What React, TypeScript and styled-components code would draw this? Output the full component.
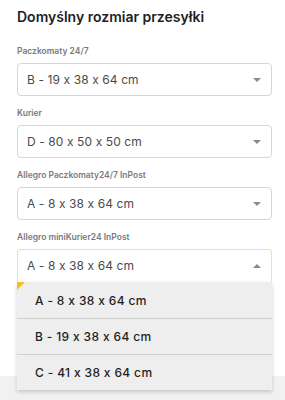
import styled, { createGlobalStyle } from "styled-components";

const GlobalStyle = createGlobalStyle`
  body {
    margin: 0;
    background: #f1f1f1;
    font-family: "Inter", "Noto Sans", sans-serif;
    font-feature-settings: "calt" 0;
  }
`;

const Page = styled.div`
  min-height: 400px;
  background: #f1f1f1;
`;

const Card = styled.div`
  background: #ffffff;
  height: 376px;
  box-sizing: border-box;
  padding: 5px 13px 0 17px;
`;

const Title = styled.h1`
  margin: 0 0 16px;
  font-size: 14px;
  line-height: 24px;
  font-weight: 600;
  color: #1e1e1e;
`;

const Fields = styled.div`
  display: flex;
  flex-direction: column;
  gap: 11px;
`;

const Field = styled.div`
  position: relative;
  display: flex;
  flex-direction: column;
`;

const Label = styled.label`
  font-size: 8.5px;
  line-height: 13px;
  font-weight: 600;
  color: #7a7a7a;
  margin-bottom: 5px;
`;

const Select = styled.div<{ $open?: boolean }>`
  height: 33px;
  box-sizing: border-box;
  display: flex;
  align-items: center;
  justify-content: space-between;
  padding: 0 10px 0 9px;
  border: 1px solid ${(p) => (p.$open ? "#fbe08a" : "#d6d6d6")};
  border-bottom-color: ${(p) => (p.$open ? "transparent" : "#d6d6d6")};
  border-radius: ${(p) => (p.$open ? "4px 4px 0 0" : "4px")};
  font-size: 12px;
  color: #4a4a4a;
  letter-spacing: 0.1px;
`;

const Arrow = styled.span<{ $up?: boolean }>`
  width: 0;
  height: 0;
  border-left: 4px solid transparent;
  border-right: 4px solid transparent;
  ${(p) =>
    p.$up ? "border-bottom: 4px solid #8a8a8a;" : "border-top: 4px solid #8a8a8a;"}
`;

const Menu = styled.ul`
  position: absolute;
  top: 100%;
  left: 0;
  right: 0;
  margin: 0;
  padding: 0;
  list-style: none;
  background: #eeeeee;
  box-shadow: 0 2px 4px rgba(0, 0, 0, 0.18);
  z-index: 10;
`;

const Corner = styled.span`
  position: absolute;
  top: 0;
  left: 0;
  width: 0;
  height: 0;
  border-top: 8px solid #f4c21d;
  border-right: 8px solid transparent;
`;

const Option = styled.li`
  height: 36px;
  box-sizing: border-box;
  display: flex;
  align-items: center;
  padding-left: 18px;
  font-size: 12px;
  font-weight: 500;
  color: #1f1f1f;
  letter-spacing: 0.35px;
  & + & {
    border-top: 1px solid #cfcfcf;
  }
`;

const fields = [
  { label: "Paczkomaty 24/7", value: "B - 19 x 38 x 64 cm" },
  { label: "Kurier", value: "D - 80 x 50 x 50 cm" },
  { label: "Allegro Paczkomaty24/7 InPost", value: "A - 8 x 38 x 64 cm" },
];

const options = ["A - 8 x 38 x 64 cm", "B - 19 x 38 x 64 cm", "C - 41 x 38 x 64 cm"];

export default function App() {
  return (
    <Page>
      <GlobalStyle />
      <Card>
        <Title>Domyślny rozmiar przesyłki</Title>
        <Fields>
          {fields.map((f) => (
            <Field key={f.label}>
              <Label>{f.label}</Label>
              <Select>
                {f.value}
                <Arrow />
              </Select>
            </Field>
          ))}
          <Field>
            <Label>Allegro miniKurier24 InPost</Label>
            <Select $open>
              A - 8 x 38 x 64 cm
              <Arrow $up />
            </Select>
            <Menu>
              <Corner />
              {options.map((o) => (
                <Option key={o}>{o}</Option>
              ))}
            </Menu>
          </Field>
        </Fields>
      </Card>
    </Page>
  );
}
